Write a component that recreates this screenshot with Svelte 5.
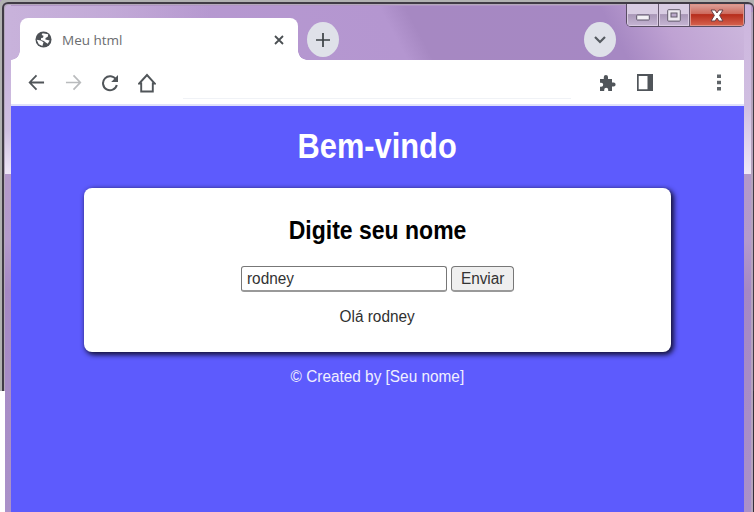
<script>
  let name = $state('rodney');
</script>

<main class="window">
  <div class="edge"></div>
  <header class="tabs">
    <div class="tab">
      <svg class="globe" width="17" height="17" viewBox="0 0 18 18">
        <circle cx="9" cy="9" r="8.5" fill="#4d5156" />
        <path d="M1.8 9.2L6 10L9 12L7.8 16L4 14Z M8 2.5L14 3.5L13.5 6L11.2 7.4L11 9L15.5 10L13.5 13.5L11 12L9.4 10.5L6.3 9.5L6.5 7.5L8.5 7.2L9 5L7 4.2Z" fill="#fff" />
      </svg>
      <span class="tabname">Meu html</span>
      <svg class="close" width="12" height="12" viewBox="0 0 12 12"><path d="M2 2L10 10M10 2L2 10" stroke="#4a4f52" stroke-width="1.8" /></svg>
    </div>
    <button class="round plus" aria-label="Nova guia"><svg width="16" height="16" viewBox="0 0 16 16"><path d="M8 1V15M1 8H15" stroke="#3b4044" stroke-width="1.7" /></svg></button>
    <button class="round chevron" aria-label="Guias"><svg width="14" height="10" viewBox="0 0 14 10"><path d="M2 2L7 7L12 2" fill="none" stroke="#565b61" stroke-width="2.2" /></svg></button>
    <div class="controls">
      <span class="ctl min"><svg width="14" height="7" viewBox="0 0 14 7"><rect x=".7" y="1" width="12.6" height="5" rx=".7" fill="#f3f0f5" stroke="#5d5568" /></svg></span>
      <span class="ctl max"><svg width="14" height="13" viewBox="0 0 14 13"><rect x=".7" y=".7" width="12.6" height="11.4" rx=".8" fill="#eeeaf1" stroke="#625a6b" /><rect x="4" y="4" width="6" height="4" fill="#bba9ca" stroke="#625a6b" /></svg></span>
      <span class="ctl exit"><svg width="14" height="13" viewBox="0 0 14 13"><path d="M1 1H5L7 4L9 1H13L9.6 6.4L13 12H9L7 9L5 12H1L4.4 6.4Z" fill="#fff" stroke="#684047" stroke-width="1" /></svg></span>
    </div>
  </header>

  <nav class="toolbar">
    <svg class="back" width="17" height="17" viewBox="0 0 18 18"><path d="M17 9H2M9 1.5L1.8 9L9 16.5" fill="none" stroke="#505559" stroke-width="1.9" /></svg>
    <svg class="next" width="17" height="17" viewBox="0 0 18 18"><path d="M1 9H16M9 1.5L16.2 9L9 16.5" fill="none" stroke="#b9bbbd" stroke-width="1.8" /></svg>
    <svg class="reload" width="18" height="18" viewBox="0 0 18 18"><path d="M15 5.6A7 7 0 1 0 15.8 11" fill="none" stroke="#505559" stroke-width="2" /><path d="M17 1V8H10.2Z" fill="#505559" /></svg>
    <svg class="home" width="18" height="20" viewBox="0 0 18 20"><path d="M1.2 10.5L9 2L16.8 10.5H14.8V18.5H3.2V10.5Z" fill="none" stroke="#505559" stroke-width="1.9" /></svg>
    <div class="address"></div>
    <svg class="puzzle" width="17" height="18" viewBox="0 0 17 18"><path d="M1 5H4.8V3A2.1 2.1 0 0 1 9 3V5H13V8.4H14.6A1.9 1.9 0 0 1 14.6 12.4H13V17H9.2V15.8A2 2 0 0 0 5.2 15.8V17H1V12.8H2.2A2 2 0 0 0 2.2 8.8H1Z" fill="#50555a" /></svg>
    <svg class="panel" width="16" height="17" viewBox="0 0 16 17"><path d="M0 0H16V17H0ZM1.7 2V15.3H10.5V2Z" fill="#50555a" fill-rule="evenodd" /></svg>
    <svg class="more" width="4" height="17" viewBox="0 0 4 17"><path d="M0 .5H4V4H0ZM0 6.8H4V10.3H0ZM0 13H4V16.5H0Z" fill="#5f6468" /></svg>
  </nav>

  <section class="page">
    <h1><span>Bem-vindo</span></h1>
    <div class="card">
      <h2><span>Digite seu nome</span></h2>
      <div class="form">
        <label><span class="body">{name}</span></label>
        <button><span class="body">Enviar</span></button>
      </div>
      <p><span class="body">Olá {name}</span></p>
    </div>
    <footer><span class="body">© Created by [Seu nome]</span></footer>
  </section>
</main>

<style>
  :global(body) { background: #fff; }
  * { box-sizing: border-box; }
  .window {
    position: relative; width: 754px; height: 512px; overflow: hidden;
    padding: 6px 10px 0 11px; isolation: isolate;
    font-family: "Liberation Sans", Arial, sans-serif;
    background:
      linear-gradient(#fff, #fff) 0 391px / 5px 121px no-repeat,
      linear-gradient(#333039, #333039) right 0 top 12px / 1px 500px no-repeat,
      linear-gradient(#b5a4bd, #b5a4bd) right 1px top 12px / 2px 500px no-repeat,
      linear-gradient(#c8b2db 0, #c8b3dc 65px, #cfbfe0 130px, #eee6f6 174px, transparent 174.5px) 4px 0 / 7px 175px no-repeat,
      linear-gradient(#cdb5de 0, #d0bee1 105px, #f0e9f7 174px, transparent 174.5px) right 3px top 0 / 7px 175px no-repeat,
      linear-gradient(#b095c5, #b49acb 240px, #a588c4 290px, #aa91c9);
  }
  .edge {
    position: absolute; inset: 2px 0 auto 2px; height: 389px; z-index: -1;
    border: 2px solid #403b45; border-bottom: 0; border-right-width: 1px;
    border-radius: 6px 6px 0 0;
    box-shadow: 0 0 0 4px #b1b1b1, inset 1px 1px #b4a7bc;
    clip-path: inset(-2px 0 0 -2px);
  }
  .tabs {
    height: 54px; display: flex; align-items: flex-start;
    background:
      linear-gradient(90deg, #c8b2db 0, #c8b2dbaa 100px, transparent 200px),
      linear-gradient(62deg, #b89bd0 0, #b496d0 350px, #a688c2 373px, #a688c3 545px, #bfa2d3 595px, #cfbbdf 680px);
  }
  .tab {
    position: relative; width: 278px; height: 43px; margin: 12px 0 0 9px; padding: 0 13px 0 15px;
    border-radius: 8px 8px 0 0; background: #fff; display: flex; align-items: center;
  }
  .tab::before, .tab::after { content: ""; position: absolute; bottom: 1px; width: 9px; height: 9px; }
  .tab::before { left: -9px; background: radial-gradient(circle at 0 0, transparent 8.5px, #fff 9px); }
  .tab::after { right: -9px; background: radial-gradient(circle at 100% 0, transparent 8.5px, #fff 9px); }
  .tabname { margin-left: 10px; font: 13.5px/18px "Open Sans", sans-serif; color: #6b6d70; white-space: nowrap; }
  .close { margin-left: auto; }
  button { padding: 0; border: 0; }
  .round {
    width: 32px; height: 35px; flex-shrink: 0; border-radius: 50%; background: #dfe1e9;
    display: flex; align-items: center; justify-content: center;
  }
  .plus { margin: 16px 0 0 9px; }
  .chevron { margin: 16px 0 0 245px; }
  .controls {
    display: flex; width: 119px; height: 23px; margin: -2px -1px 0 10px; flex-shrink: 0;
    border: 1px solid #594d63; border-top: 0; border-radius: 0 0 5px 5px; overflow: hidden;
  }
  .ctl {
    width: 33px; display: flex; align-items: center; justify-content: center;
    border-right: 1px solid #66596f; box-shadow: inset 0 0 0 1px #dacce3;
    background: linear-gradient(#d8cce2 0 45%, #a997b7 48%, #c6b6d4);
  }
  .min svg { margin-top: 5px; }
  .max { width: 31px; }
  .exit {
    width: 55px; border: 0; box-shadow: inset 0 0 0 1px #df9388;
    background: linear-gradient(#dda29b 0, #cd695c 45%, #b62d1c 48%, #d76450);
  }
  .toolbar {
    height: 46px; display: flex; align-items: center; padding: 1px 23px 0 17px;
    border-bottom: 2px solid #dfe0fb; background: #fff;
  }
  .next { margin-left: 20px; }
  .reload { margin-left: 19px; }
  .home { margin-left: 19px; }
  .address { height: 33px; width: 388px; margin-left: 27px; border-bottom: 1px solid #f0f2f6; }
  .puzzle { margin-left: 28px; }
  .panel { margin-left: 21px; }
  .more { margin-left: auto; }
  .page { height: 406px; background: #5d5bfd; text-align: center; padding: 20px 73px 0; }
  h1, h2, p { margin: 0; }
  span { white-space: nowrap; }
  h1 { color: #fff; font-size: 34.5px; line-height: 40px; }
  h1 span { display: inline-block; transform: scaleX(.893); }
  .card {
    height: 164px; margin-top: 22px; padding-top: 27px; border-radius: 8px; background: #fff;
    box-shadow: 2px 2px 5px 1px #15133d;
  }
  h2 { color: #000; font-size: 25px; line-height: 30px; }
  h2 span { display: inline-block; transform: scaleX(.92); }
  .body { display: inline-block; font: 16px/20px "Liberation Sans", Arial, sans-serif; transform: scaleX(.96); }
  .form { display: flex; justify-content: center; gap: 4px; margin-top: 21px; }
  label {
    width: 206px; height: 26px; text-align: left; padding: 2px 5px; color: #333;
    border: 1px solid #777; border-bottom-width: 2px; border-bottom-color: #999; border-radius: 3px;
  }
  label span { transform-origin: left; }
  .form button {
    width: 63px; height: 26px; background: #efefef; color: #333;
    border: 1px solid #777; border-bottom: 2px solid #999; border-radius: 4px;
  }
  p { color: #303030; margin-top: 15px; line-height: 20px; }
  footer { color: #f0efff; line-height: 20px; margin-top: 15px; }
</style>
